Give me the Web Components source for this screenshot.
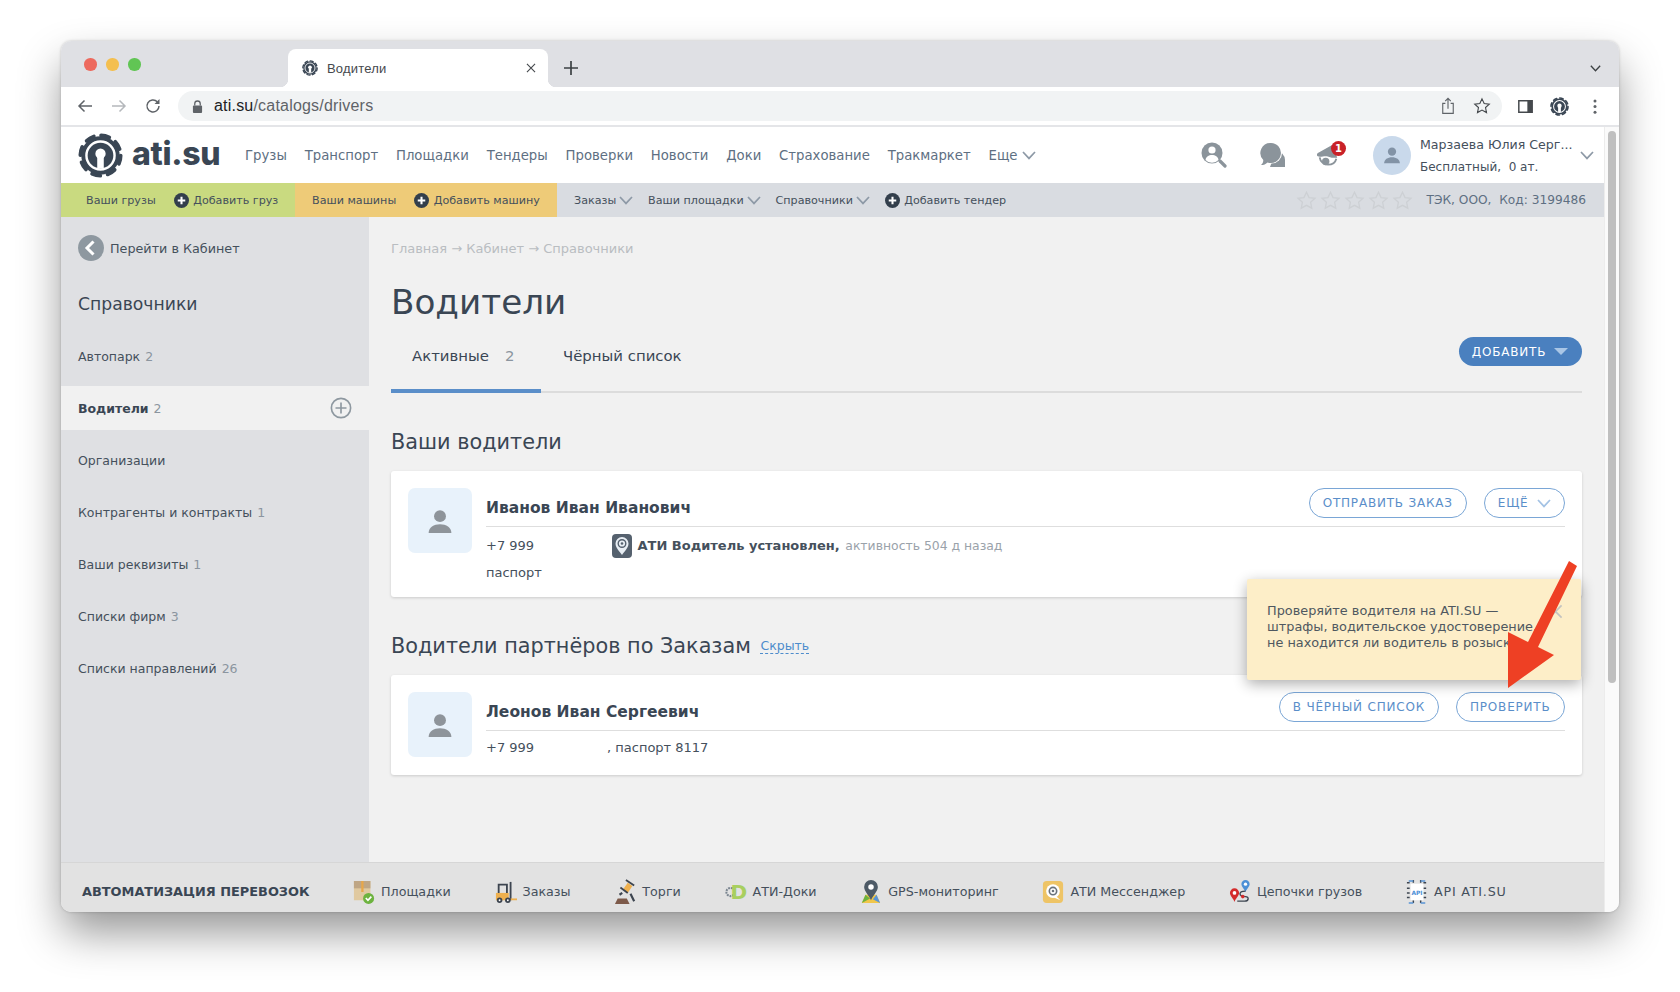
<!DOCTYPE html>
<html lang="ru">
<head>
<meta charset="utf-8">
<title>Водители</title>
<style>
  html, body { margin: 0; height: 100%; background: #fff; overflow: hidden; }
  body { font-family: "DejaVu Sans", Verdana, sans-serif; padding: 41px 0 0 61px; box-sizing: border-box; }
</style>
</head>
<body>

<browser-window>
  <browser-tabs slot="tabs" title-text="Водители"></browser-tabs>
  <browser-toolbar slot="toolbar"></browser-toolbar>

  <site-header>
    <nav-link>Грузы</nav-link>
    <nav-link>Транспорт</nav-link>
    <nav-link>Площадки</nav-link>
    <nav-link>Тендеры</nav-link>
    <nav-link>Проверки</nav-link>
    <nav-link>Новости</nav-link>
    <nav-link>Доки</nav-link>
    <nav-link>Страхование</nav-link>
    <nav-link>Тракмаркет</nav-link>
    <nav-link more>Еще</nav-link>
    <span slot="user-name">Марзаева Юлия Серг...</span>
    <span slot="user-plan">Бесплатный,&nbsp; 0 ат.</span>
  </site-header>

  <sub-nav>
    <sub-block slot="green" color="#c9da80" width="234" pad="25">
      <sub-link>Ваши грузы</sub-link>
      <sub-link plus>Добавить груз</sub-link>
    </sub-block>
    <sub-block slot="yellow" color="#eecb78" width="262" pad="17">
      <sub-link>Ваши машины</sub-link>
      <sub-link plus>Добавить машину</sub-link>
    </sub-block>
    <sub-link more>Заказы</sub-link>
    <sub-link more>Ваши площадки</sub-link>
    <sub-link more>Справочники</sub-link>
    <sub-link plus>Добавить тендер</sub-link>
    <span slot="company">ТЭК, ООО,&nbsp; Код: 3199486</span>
  </sub-nav>

  <page-layout>
    <side-menu slot="side" back="Перейти в Кабинет" heading="Справочники">
      <side-item count="2">Автопарк</side-item>
      <side-item count="2" active>Водители</side-item>
      <side-item>Организации</side-item>
      <side-item count="1">Контрагенты и контракты</side-item>
      <side-item count="1">Ваши реквизиты</side-item>
      <side-item count="3">Списки фирм</side-item>
      <side-item count="26">Списки направлений</side-item>
    </side-menu>

    <bread-crumbs>Главная → Кабинет → Справочники</bread-crumbs>
    <page-title>Водители</page-title>

    <page-tabs>
      <tab-item active count="2">Активные</tab-item>
      <tab-item>Чёрный список</tab-item>
      <add-button slot="action">ДОБАВИТЬ</add-button>
    </page-tabs>

    <section-heading>Ваши водители</section-heading>
    <driver-card>
      <span slot="name">Иванов Иван Иванович</span>
      <pill-button slot="actions">ОТПРАВИТЬ ЗАКАЗ</pill-button>
      <pill-button slot="actions" more>ЕЩЁ</pill-button>
      <info-row>
        <span>+7 999</span>
        <span slot="extra"><ati-icon name="shield" w="20" h="24"></ati-icon><b>АТИ Водитель установлен,</b><muted-text>активность 504 д назад</muted-text></span>
      </info-row>
      <info-row>паспорт</info-row>
    </driver-card>

    <section-heading second>Водители партнёров по Заказам <a slot="link">Скрыть</a></section-heading>
    <driver-card>
      <span slot="name">Леонов Иван Сергеевич</span>
      <pill-button slot="actions">В ЧЁРНЫЙ СПИСОК</pill-button>
      <pill-button slot="actions">ПРОВЕРИТЬ</pill-button>
      <info-row tight>
        <span>+7 999</span>
        <span slot="extra" class="passport">, паспорт 8117</span>
      </info-row>
    </driver-card>

    <hint-popup slot="over">Проверяйте водителя на ATI.SU —<br>штрафы, водительское удостоверение,<br>не находится ли водитель в розыске</hint-popup>
  </page-layout>

  <promo-bar>
    <span slot="label">АВТОМАТИЗАЦИЯ ПЕРЕВОЗОК</span>
    <promo-item icon="box">Площадки</promo-item>
    <promo-item icon="forklift">Заказы</promo-item>
    <promo-item icon="gavel">Торги</promo-item>
    <promo-item icon="docs">АТИ-Доки</promo-item>
    <promo-item icon="gps">GPS-мониторинг</promo-item>
    <promo-item icon="messenger">АТИ Мессенджер</promo-item>
    <promo-item icon="chain">Цепочки грузов</promo-item>
    <promo-item icon="api" style="letter-spacing:.8px">API ATI.SU</promo-item>
  </promo-bar>
</browser-window>

<script>
// Desenhos inline usados pelo ati-icon
const ICONS = {
  gear: ['0 0 48 48', `
    <circle cx="24" cy="24" r="21.500" fill="none" stroke="currentColor" stroke-width="4" stroke-dasharray="9 7.890" stroke-linecap="round"/>
    <circle cx="24" cy="24" r="20.500" fill="currentColor"/>
    <circle cx="24" cy="24" r="15" fill="none" stroke="#fff" stroke-width="2.600"/>
    <circle cx="24" cy="22" r="5.500" fill="#fff"/>
    <rect x="20.500" y="25" width="7" height="13" fill="#fff"/>`],
  chev: ['0 0 14 9', `<path d="M1 1l6 6.4L13 1" fill="none" stroke="currentColor" stroke-width="1.7"/>`],
  plus: ['0 0 16 16', `<circle cx="8" cy="8" r="8" fill="currentColor"/><path d="M8 4v8M4 8h8" stroke="#fff" stroke-width="2.2"/>`],
  plusring: ['0 0 24 24', `<circle cx="12" cy="12" r="10.500" fill="none" stroke="currentColor" stroke-width="1.800"/><path d="M12 6v12M6 12h12" stroke="currentColor" stroke-width="1.800"/>`],
  star: ['0 0 24 24', `<path d="M12 2.500l2.900 6.200 6.800.8-5 4.600 1.300 6.700-6-3.300-6 3.300 1.300-6.700-5-4.600 6.800-.8z" fill="none" stroke="currentColor" stroke-width="1.500"/>`],
  person: ['0 0 24 24', `<circle cx="12" cy="7.500" r="5.500" fill="currentColor"/><path d="M1.500 23c0-5 4.800-8 10.500-8s10.500 3 10.500 8z" fill="currentColor"/>`],
  search: ['0 0 26 26', `<circle cx="11" cy="11" r="10.500" fill="currentColor"/><circle cx="11" cy="8" r="3.600" fill="#fff"/><path d="M4.500 18c.5-3.500 3.200-5 6.500-5s6 1.500 6.500 5a9 9 0 0 1-13 0z" fill="#fff"/><path d="M19 19l5 5" stroke="currentColor" stroke-width="3.200" stroke-linecap="round"/>`],
  chat: ['0 0 26 26', `<path d="M16 9a9 9 0 0 1 9 9v7h-15z" fill="currentColor"/><circle cx="11.500" cy="11" r="10.500" fill="#fff"/><path d="M11 1a10 10 0 1 1-3.500 19.400C6 22 3.500 23 1 23c1.500-1.200 2.300-2.700 2.300-5A10 10 0 0 1 11 1z" fill="currentColor"/>`],
  bell: ['0 0 26 26', `<path d="M1 13c0-1.500 1-2.500 2.500-3L18 2l5 14-6 0c-3-1.500-6-2-9.500-1.500C4 15 1 15 1 13z" fill="currentColor"/><circle cx="10.500" cy="20" r="4" fill="currentColor"/><path d="M4 15.500c.5 4 4 8 9 8s8-2.500 9-6.500" fill="none" stroke="currentColor" stroke-width="2"/>`],
  back: ['0 0 26 26', `<circle cx="13" cy="13" r="13" fill="currentColor"/><path d="M15.500 6.500L9 13l6.500 6.500" fill="none" stroke="#fff" stroke-width="3"/>`],
  close: ['0 0 16 16', `<path d="M1.500 1.500l13 13M14.500 1.500l-13 13" stroke="currentColor" stroke-width="1.800"/>`],
  shield: ['0 0 20 24', `<rect x="0" y="0" width="20" height="24" rx="4" fill="#55616e"/><path d="M10 3a6.500 6.500 0 0 1 6.500 6.500C16.500 14 12 18 10 21c-2-3-6.500-7-6.500-11.500A6.500 6.500 0 0 1 10 3z" fill="#e8eef4"/><circle cx="10" cy="9.500" r="3.800" fill="none" stroke="#55616e" stroke-width="1.400"/><circle cx="10" cy="9.500" r="1.300" fill="#55616e"/>`],
  box: ['0 0 24 28', `<rect x="1" y="2" width="18" height="21" fill="#e0c9a0"/><rect x="1" y="2" width="18" height="8" fill="#bfa685"/><rect x="9" y="2" width="2.500" height="12" fill="#e8a74a"/><circle cx="17" cy="21" r="6" fill="#6db33f"/><path d="M14 20.500l2.300 2.500 3.700-4" fill="none" stroke="#fff" stroke-width="1.800"/>`],
  forklift: ['0 0 24 26', `<path d="M1 14h14v8H1z" fill="#eeb04f"/><path d="M4 14V5h9v9" fill="none" stroke="#3d4550" stroke-width="2"/><path d="M17 2v20" stroke="#3d4550" stroke-width="2"/><path d="M17 21h7" stroke="#eeb04f" stroke-width="2"/><circle cx="5" cy="22" r="3" fill="#3d4550"/><circle cx="14" cy="22" r="3" fill="#3d4550"/><circle cx="5" cy="22" r="1" fill="#fff"/><circle cx="14" cy="22" r="1" fill="#fff"/>`],
  gavel: ['0 0 24 28', `<path d="M1 27l3-6h10l3 6z" fill="#7d5a4a"/><path d="M10 11l5-7 5 3.500-5 7.500z" fill="#eeb04f"/><path d="M13 1l9 6M7 9l8 6" stroke="#3d4550" stroke-width="2"/><path d="M9 15l-3 2M18 16l4 8" stroke="#3d4550" stroke-width="2.400"/>`],
  docs: ['0 0 24 26', `<circle cx="6" cy="13" r="4.500" fill="none" stroke="#7a8590" stroke-width="2.200" stroke-dasharray="2 1"/><text x="6" y="21" font-family="DejaVu Sans, sans-serif" font-weight="700" font-size="22" fill="#a8cf5f">D</text>`],
  gps: ['0 0 24 28', `<path d="M2 26l4-9h12l4 9z" fill="#f0c64a"/><path d="M2 26l4-9 5 4z" fill="#6db33f"/><path d="M22 26l-4-9-4 5z" fill="#5a95d6"/><path d="M12 1a7.500 7.500 0 0 1 7.500 7.500C19.500 13 14 18 12 23c-2-5-7.500-10-7.500-14.500A7.500 7.500 0 0 1 12 1z" fill="#4d5a66"/><circle cx="12" cy="8.500" r="3" fill="#fff"/>`],
  messenger: ['0 0 24 26', `<rect x="1" y="1" width="22" height="24" rx="4" fill="#eec466"/><circle cx="12" cy="12" r="7.500" fill="#fff"/><path d="M15 17l5 5-7-3z" fill="#fff"/><circle cx="12" cy="12" r="4" fill="none" stroke="#6a737c" stroke-width="1.800"/><circle cx="12" cy="12" r="1.400" fill="#6a737c"/>`],
  chain: ['0 0 24 28', `<path d="M18 1a4.500 4.500 0 0 1 4.500 4.500C22.500 8 19 11 18 14c-1-3-4.500-6-4.500-8.500A4.500 4.500 0 0 1 18 1z" fill="#4d90d6"/><circle cx="18" cy="5.500" r="1.800" fill="#fff"/><path d="M6 10a5 5 0 0 1 5 5c0 3-4 6-5 10-1-4-5-7-5-10a5 5 0 0 1 5-5z" fill="#d42b2b"/><circle cx="6" cy="15" r="2" fill="#fff"/><path d="M18 13c-8 0-8 6 0 6 4 0 4 5-1 5H9" fill="none" stroke="#3d4550" stroke-width="1.500"/><circle cx="15" cy="19" r="2" fill="#d42b2b"/>`],
  api: ['0 0 24 28', `<path d="M1 4h4M8 1v4M16 1v4M19 4h4M1 10h4M1 15h4M1 20h4M19 10h4M19 15h4M19 20h4M8 23v4M16 23v4" stroke="#3d4550" stroke-width="1.600" stroke-dasharray="3 1"/><path d="M3 2h5M16 2h5M3 26h5M16 26h5" stroke="#5a95d6" stroke-width="1.600"/><rect x="5" y="5" width="14" height="18" fill="#fff"/><text x="12" y="17" text-anchor="middle" font-family="DejaVu Sans, sans-serif" font-weight="700" font-size="6.500" letter-spacing="0" fill="#4d90d6">API</text>`],
  back_arrow: ['0 0 18 18', `<path d="M16 9H3M8.500 3.500L3 9l5.500 5.500" fill="none" stroke="currentColor" stroke-width="1.500"/>`],
  forward_arrow: ['0 0 18 18', `<path d="M2 9h13M9.500 3.500L15 9l-5.500 5.500" fill="none" stroke="currentColor" stroke-width="1.500"/>`],
  reload: ['0 0 18 18', `<path d="M15 9a6 6 0 1 1-1.700-4.200" fill="none" stroke="currentColor" stroke-width="1.500"/><path d="M15.500 2v5h-5z" fill="currentColor"/>`],
  lock: ['0 0 12 14', `<rect x="1" y="6" width="10" height="8" rx="1" fill="currentColor"/><path d="M3 6V4a3 3 0 0 1 6 0v2" fill="none" stroke="currentColor" stroke-width="1.400"/>`],
  share: ['0 0 16 20', `<path d="M5 7H2v11.500h12V7h-3" fill="none" stroke="currentColor" stroke-width="1.300"/><path d="M8 13V1.500M4.800 4.500L8 1.300l3.200 3.200" fill="none" stroke="currentColor" stroke-width="1.300"/>`],
  panel: ['0 0 16 14', `<rect x=".8" y=".8" width="14.400" height="12.400" fill="none" stroke="currentColor" stroke-width="1.600"/><rect x="10" y="1" width="5" height="12" fill="currentColor"/>`],
  dots: ['0 0 4 16', `<circle cx="2" cy="2" r="1.600" fill="currentColor"/><circle cx="2" cy="8" r="1.600" fill="currentColor"/><circle cx="2" cy="14" r="1.600" fill="currentColor"/>`],
  plusthin: ['0 0 14 14', `<path d="M7 0v14M0 7h14" stroke="currentColor" stroke-width="1.700"/>`],
};

// Pequeno helper: cria a classe do componente a partir do CSS e do HTML
function component(tag, css, html, setup) {
  const template = document.createElement('template');
  template.innerHTML = `<style>${css}</style>${html}`;
  customElements.define(tag, class extends HTMLElement {
    constructor() {
      super();
      this.attachShadow({ mode: 'open' });
      this.shadowRoot.appendChild(template.content.cloneNode(true));
    }
    connectedCallback() {
      if (setup) setup(this, this.shadowRoot);
    }
  });
}

// Cria um ati-icon já com os atributos
function makeIcon(name, w, h) {
  const icon = document.createElement('ati-icon');
  icon.setAttribute('name', name);
  icon.setAttribute('w', w);
  icon.setAttribute('h', h);
  return icon;
}

// Ícone genérico
component('ati-icon', ':host{display:inline-flex;flex:none} svg{display:block}', '<svg xmlns="http://www.w3.org/2000/svg"></svg>', (el, root) => {
  const [box, body] = ICONS[el.getAttribute('name')];
  const svg = root.querySelector('svg');
  svg.setAttribute('viewBox', box);
  svg.setAttribute('width', el.getAttribute('w'));
  svg.setAttribute('height', el.getAttribute('h'));
  svg.innerHTML = body;
});

// Janela do navegador
component('browser-window', `
  :host{display:flex;flex-direction:column;width:1558px;height:871px;border-radius:10px;background:#fafafa;
    box-shadow:0 22px 44px -2px rgba(0,0,0,.42),0 0 3px rgba(0,0,0,.22);overflow:hidden;position:relative}
  .frame{flex:1;display:flex;min-height:0}
  .page{flex:1;display:flex;flex-direction:column;min-width:0}
  .scroll{width:15px;flex:none;background:#fafafa;border-left:1px solid #ececec;box-sizing:border-box;padding:4px 3px 0 3px}
  .thumb{width:8px;height:552px;border-radius:4px;background:#bfbfbf}
`, `
  <slot name="tabs"></slot>
  <slot name="toolbar"></slot>
  <div class="frame">
    <div class="page"><slot></slot></div>
    <div class="scroll"><div class="thumb"></div></div>
  </div>
`);

component('browser-tabs', `
  :host{display:flex;height:46px;background:#dfe0e4;box-sizing:border-box;padding:8px 0 0 0;align-items:flex-start;position:relative;font-family:"Liberation Sans",Arial,sans-serif}
  .lights{display:flex;gap:9.500px;padding:9px 0 0 23px;width:227px;box-sizing:border-box}
  .lights i{width:12.500px;height:12.500px;border-radius:50%;display:block}
  .tab{width:260px;height:38px;background:#fff;border-radius:8px 8px 0 0;display:flex;align-items:center;padding:0 12px 0 14px;box-sizing:border-box;font-size:13px;color:#45494d;position:relative}
  .tab::before,.tab::after{content:"";position:absolute;bottom:0;width:8px;height:8px}
  .tab::before{left:-8px;background:radial-gradient(circle at 0 0,transparent 8px,#fff 8.500px)}
  .tab::after{right:-8px;background:radial-gradient(circle at 100% 0,transparent 8px,#fff 8.500px)}
  .label{flex:1;margin-left:9px;letter-spacing:.2px}
  .gear{color:#3a4654}
  .new{margin:12px 0 0 16px;color:#3c4043}
  .down{margin:16px 0 0 auto;padding-right:18px;color:#3c4043}
`, `
  <div class="lights"><i style="background:#ed6a5e"></i><i style="background:#f4bf4f"></i><i style="background:#61c554"></i></div>
  <div class="tab"><ati-icon class="gear" name="gear" w="16" h="16"></ati-icon><span class="label"></span><ati-icon name="close" w="10" h="10"></ati-icon></div>
  <ati-icon class="new" name="plusthin" w="14" h="14"></ati-icon>
  <ati-icon class="down" name="chev" w="11" h="7"></ati-icon>
`, (el, root) => {
  root.querySelector('.label').textContent = el.getAttribute('title-text');
});

component('browser-toolbar', `
  :host{display:flex;height:40px;background:#fff;box-sizing:border-box;border-bottom:2px solid #e4e5e8;align-items:center;padding:0 14px 0 15px;font-family:"Liberation Sans",Arial,sans-serif;color:#5f6368}
  .nav{display:flex;align-items:center;gap:16px;width:102px}
  .url{width:1324px;height:30px;border-radius:15px;background:#f1f3f4;display:flex;align-items:center;padding:0 11px 0 14px;box-sizing:border-box;font-size:16px;letter-spacing:.2px}
  .url b{font-weight:400;color:#202124}
  .url span{flex:1;margin-left:11px}
  .url ati-icon + ati-icon{margin-left:18px}
  .end{display:flex;align-items:center;margin-left:16px}
  .gear{color:#3a4654;margin-left:17px}
  .dots{margin-left:24px}
`, `
  <div class="nav">
    <ati-icon name="back_arrow" w="18" h="18"></ati-icon>
    <ati-icon name="forward_arrow" w="18" h="18" style="color:#b5b8bc"></ati-icon>
    <ati-icon name="reload" w="18" h="18"></ati-icon>
  </div>
  <div class="url">
    <ati-icon name="lock" w="11" h="13"></ati-icon>
    <span><b>ati.su</b>/catalogs/drivers</span>
    <ati-icon name="share" w="14" h="18"></ati-icon>
    <ati-icon name="star" w="18" h="18" style="color:#45494d"></ati-icon>
  </div>
  <div class="end">
    <ati-icon name="panel" w="15" h="13" style="color:#45494d"></ati-icon>
    <ati-icon class="gear" name="gear" w="19" h="19"></ati-icon>
    <ati-icon class="dots" name="dots" w="4" h="15"></ati-icon>
  </div>
`);

// Cabeçalho do site
component('site-header', `
  :host{display:flex;align-items:center;height:56px;background:#fff;flex:none;box-sizing:border-box;padding:0 10px 0 17px;position:relative}
  .logo{display:flex;align-items:center;color:#3a4654;width:167px;gap:9px}
  .logo span{font:800 32px/1 Inter,"Open Sans",sans-serif;letter-spacing:-.3px;color:#3a4654;margin-top:-3px}
  .links{display:flex;gap:17.800px;flex:1}
  .tools{display:flex;align-items:center;color:#8b949b}
  .tools ati-icon{display:block}
  .bell{position:relative;margin-left:30px}
  .bell i{position:absolute;right:-6px;top:-2px;width:15px;height:15px;border-radius:50%;background:#c92128;color:#fff;font:700 10px/15px "DejaVu Sans",sans-serif;text-align:center}
  .avatar{width:38px;height:39px;border-radius:50%;background:#c9d9eb;display:flex;align-items:center;justify-content:center;color:#8293a6;margin-left:33px}
  .user{margin-left:9px;width:155px;font-size:12.600px;color:#45505c;line-height:21px;white-space:nowrap;padding-top:2px}
  .user div:last-child{font-size:12px;margin-top:2px}
  .caret{color:#8d99a6;margin-left:5px}
`, `
  <div class="logo"><ati-icon name="gear" w="45" h="45"></ati-icon><span>ati.su</span></div>
  <div class="links"><slot></slot></div>
  <div class="tools">
    <ati-icon name="search" w="26" h="26" style="margin-right:33px"></ati-icon>
    <ati-icon name="chat" w="26" h="26"></ati-icon>
    <div class="bell"><ati-icon name="bell" w="24" h="24"></ati-icon><i>1</i></div>
    <div class="avatar"><ati-icon name="person" w="18" h="18"></ati-icon></div>
    <div class="user"><div><slot name="user-name"></slot></div><div><slot name="user-plan"></slot></div></div>
    <ati-icon class="caret" name="chev" w="14" h="9"></ati-icon>
  </div>
`);

component('nav-link', `
  :host{display:inline-flex;align-items:center;gap:4px;font-size:13.250px;color:#5e6f82;white-space:nowrap}
  ati-icon{color:#8d99a6}
`, `<slot></slot>`, (el, root) => {
  if (el.hasAttribute('more')) root.appendChild(makeIcon('chev', 14, 9));
});

// Segunda barra com blocos coloridos
component('sub-nav', `
  :host{display:flex;align-items:center;height:34px;background:#d9dce1;flex:none}
  .links{display:flex;align-items:center;gap:14.800px;padding-left:17px;flex:1}
  .rate{display:flex;align-items:center;gap:3px;color:#cdd0d4}
  .company{font-size:12.200px;color:#5e6f82;margin:0 18px 0 13px;white-space:nowrap}
`, `
  <slot name="green"></slot><slot name="yellow"></slot>
  <div class="links"><slot></slot></div>
  <div class="rate">
    <ati-icon name="star" w="21" h="21"></ati-icon><ati-icon name="star" w="21" h="21"></ati-icon><ati-icon name="star" w="21" h="21"></ati-icon><ati-icon name="star" w="21" h="21"></ati-icon><ati-icon name="star" w="21" h="21"></ati-icon>
  </div>
  <div class="company"><slot name="company"></slot></div>
`);

component('sub-block', `
  :host{display:flex;align-items:center;height:34px;box-sizing:border-box;gap:18px;flex:none}
`, `<slot></slot>`, (el) => {
  el.style.background = el.getAttribute('color');
  el.style.width = el.getAttribute('width') + 'px';
  el.style.paddingLeft = el.getAttribute('pad') + 'px';
});

component('sub-link', `
  :host{display:inline-flex;align-items:center;gap:3px;font-size:11.150px;color:#45505c;white-space:nowrap}
  .plus{color:#333f4c;margin-right:1.500px;display:flex}
  .chev{color:#8d99a6;display:flex}
  span:empty{display:none}
`, `<span class="plus"></span><slot></slot><span class="chev"></span>`, (el, root) => {
  if (el.hasAttribute('plus')) root.querySelector('.plus').appendChild(makeIcon('plus', 15, 15));
  if (el.hasAttribute('more')) root.querySelector('.chev').appendChild(makeIcon('chev', 14, 9));
});

// Área principal
component('page-layout', `
  :host{flex:1;display:flex;min-height:0}
  .main{flex:1;background:#f1f1f1;padding:23px 22.500px 0 22px;position:relative;min-width:0}
  svg{position:absolute;left:0;top:0;pointer-events:none;z-index:3}
`, `
  <slot name="side"></slot>
  <div class="main">
    <slot></slot>
    <slot name="over"></slot>
    <svg width="1235" height="645" viewBox="369 217 1235 645">
      <path d="M1569 561L1577 566L1538 647L1554 655L1508 688L1508 632L1528 642z" fill="#ee4024"/>
    </svg>
  </div>
`);

component('side-menu', `
  :host{display:block;width:308px;flex:none;background:#dfe0e3;padding-top:18px;box-sizing:border-box}
  .back{display:flex;align-items:center;gap:6px;padding-left:17px;font-size:12.750px;color:#45505c;height:26px}
  .back ati-icon{color:#8e98a0}
  h2{font-size:17.200px;font-weight:400;color:#3a4654;margin:31px 0 18px 17px;line-height:24px}
`, `
  <div class="back"><ati-icon name="back" w="26" h="26"></ati-icon><span class="t"></span></div>
  <h2></h2>
  <slot></slot>
`, (el, root) => {
  root.querySelector('.t').textContent = el.getAttribute('back');
  root.querySelector('h2').textContent = el.getAttribute('heading');
});

component('side-item', `
  :host{display:flex;align-items:center;height:44px;margin-bottom:8px;padding:0 17px;font-size:12.500px;color:#45505c;box-sizing:border-box}
  :host([active]){background:#f1f1f1;font-weight:700;color:#3a4654}
  .n{margin-left:5px;color:#8b959f;font-weight:400}
  ati-icon{margin-left:auto;color:#8e98a0}
`, `<slot></slot><span class="n"></span>`, (el, root) => {
  root.querySelector('.n').textContent = el.getAttribute('count') || '';
  if (el.hasAttribute('active')) root.appendChild(makeIcon('plusring', 22, 22));
});

component('bread-crumbs', `:host{display:block;font-size:13px;line-height:18px;color:#b9bdc1}`, `<slot></slot>`);
component('page-title', `:host{display:block;font-size:34.200px;line-height:44px;margin-top:22px;color:#3a4654}`, `<slot></slot>`);

component('page-tabs', `
  :host{display:flex;justify-content:space-between;height:69px;box-sizing:border-box;border-bottom:2px solid #dcdcdc}
  .tabs{display:flex}
  .action{padding-top:13px}
`, `<div class="tabs"><slot></slot></div><div class="action"><slot name="action"></slot></div>`);

component('tab-item', `
  :host{display:flex;align-items:center;height:69px;box-sizing:border-box;padding:0 0 6px 22px;font-size:14.900px;color:#3a4654}
  :host([active]){width:150px;padding-left:21px;border-bottom:4px solid #5a8ec9;padding-bottom:2px}
  .n{margin-left:16px;color:#8b959f}
`, `<slot></slot><span class="n"></span>`, (el, root) => {
  root.querySelector('.n').textContent = el.getAttribute('count') || '';
});

component('add-button', `
  :host{display:inline-flex;align-items:center;gap:8px;height:29px;width:123px;justify-content:center;box-sizing:border-box;border-radius:15px;background:#4a80bf;color:#fff;font-size:12px;letter-spacing:.8px}
  i{width:0;height:0;border:7px solid transparent;border-top:7px solid #a9c6e6;border-bottom:0}
`, `<slot></slot><i></i>`);

component('section-heading', `
  :host{display:block;font-size:20.800px;line-height:26px;color:#3a4654;margin-top:36px;margin-bottom:16px}
  ::slotted(a){display:inline-block;font-size:12.500px;line-height:14px;color:#4d8ccc;border-bottom:1px dashed #4d8ccc;margin-left:3px;vertical-align:3px}
`, `<slot></slot> <slot name="link"></slot>`);

component('driver-card', `
  :host{display:flex;background:#fff;border-radius:3px;box-shadow:0 1px 3px rgba(0,0,0,.16);padding:17px 17px 11px 17px;gap:14px}
  .ava{width:64px;height:65px;border-radius:7px;background:#e8f2fb;display:flex;align-items:center;justify-content:center;color:#8e949a;flex:none}
  .body{flex:1;min-width:0}
  .head{display:flex;justify-content:space-between;height:39px;box-sizing:border-box;border-bottom:1px solid #dedede;margin-bottom:5px}
  .name{font-size:15.500px;font-weight:700;color:#3a4654;padding-top:11px;line-height:18px}
  .act{display:flex;gap:17px;align-items:flex-start}
`, `
  <div class="ava"><ati-icon name="person" w="26" h="26"></ati-icon></div>
  <div class="body">
    <div class="head"><div class="name"><slot name="name"></slot></div><div class="act"><slot name="actions"></slot></div></div>
    <slot></slot>
  </div>
`);

component('muted-text', `:host{color:#9aa2aa;font-size:12.400px}`, `<slot></slot>`);

component('info-row', `
  :host{display:flex;height:27px;align-items:center;font-size:13px;color:#45505c}
  :host([tight]){margin-top:-2px;margin-bottom:3px}
  .first{width:126px;flex:none}
  ::slotted(.passport){margin-left:-5px}
  ::slotted([slot=extra]){display:inline-flex;align-items:center;gap:5.500px;white-space:nowrap}
`, `<div class="first"><slot></slot></div><slot name="extra"></slot>`);

component('pill-button', `
  :host{display:inline-flex;align-items:center;justify-content:center;gap:8px;height:30px;box-sizing:border-box;padding:0 13px;border:1.500px solid #7aa6d6;border-radius:15px;color:#5a8ec9;font-size:12px;letter-spacing:.8px;background:#fff;white-space:nowrap}
  ati-icon{color:#a3c2e4}
`, `<slot></slot>`, (el, root) => {
  if (el.hasAttribute('more')) root.appendChild(makeIcon('chev', 14, 9));
});

component('hint-popup', `
  :host{position:absolute;right:23px;top:362px;width:334px;height:101px;box-sizing:border-box;padding:24px 20px 0 20px;background:#fdeec8;border-radius:2px;box-shadow:0 4px 14px rgba(0,0,0,.32);font-size:12.850px;line-height:16px;color:#4f5860;white-space:nowrap;z-index:2}
  ati-icon{position:absolute;right:18px;top:25px;color:#c3c3c0}
`, `<slot></slot><ati-icon name="close" w="15" h="15"></ati-icon>`);

// Barra inferior
component('promo-bar', `
  :host{display:flex;align-items:center;height:50px;flex:none;background:#e2e2e2;border-top:1px solid #d6d6d6;box-sizing:border-box;padding:8px 0 0 21px;font-size:12.700px;color:#45505c}
  .label{font-weight:700;font-size:12.900px;color:#3a4654;width:271px;flex:none;white-space:nowrap}
  .items{display:flex;gap:43.700px}
`, `<div class="label"><slot name="label"></slot></div><div class="items"><slot></slot></div>`);

component('promo-item', `
  :host{display:inline-flex;align-items:center;gap:6px;white-space:nowrap}
`, `<slot></slot>`, (el, root) => {
  root.prepend(makeIcon(el.getAttribute('icon'), 22, 26));
});
</script>
</body>
</html>
